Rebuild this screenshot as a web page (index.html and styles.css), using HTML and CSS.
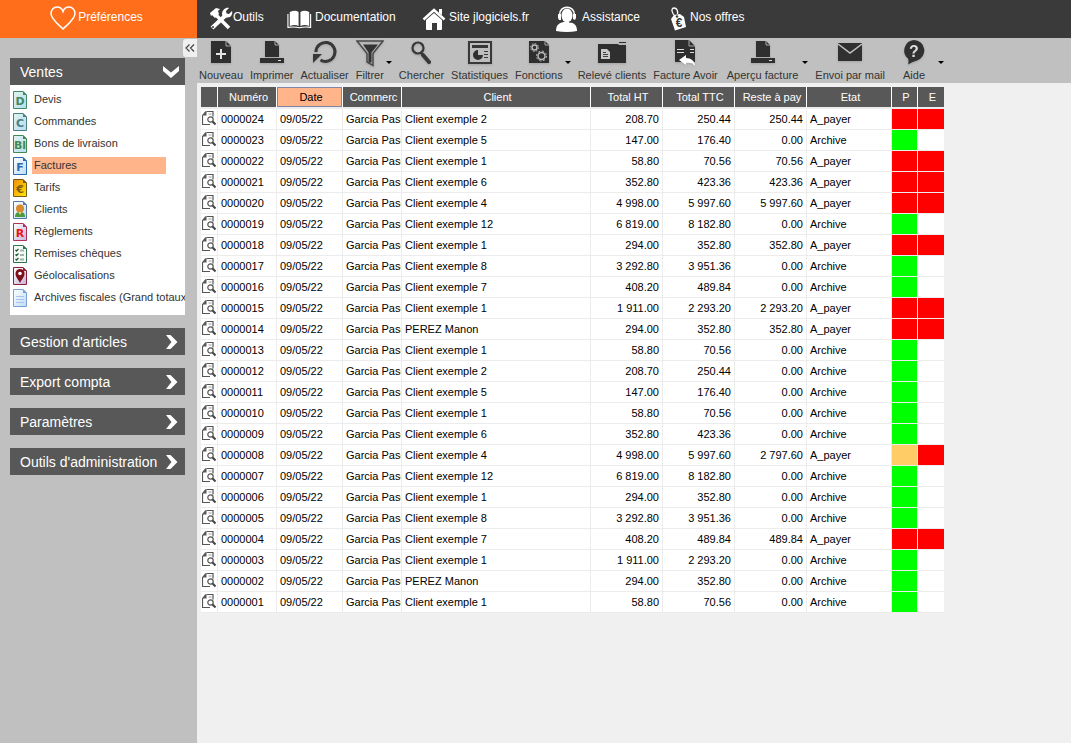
FILE: index.html
```html
<!DOCTYPE html>
<html lang="fr">
<head>
<meta charset="utf-8">
<title>Factures</title>
<link rel="stylesheet" href="styles.css">
</head>
<body>
<svg class="defs" aria-hidden="true">
  <defs>
    <linearGradient id="g-green" x1="0" y1="0" x2="1" y2="1"><stop offset="0" stop-color="#e2f3ee"/><stop offset="1" stop-color="#b4dcf2"/></linearGradient>
    <linearGradient id="g-blue" x1="0" y1="0" x2="1" y2="1"><stop offset="0" stop-color="#fff"/><stop offset="1" stop-color="#bcdcf8"/></linearGradient>
    <linearGradient id="g-gold" x1="0" y1="0" x2="1" y2="1"><stop offset="0" stop-color="#f08c10"/><stop offset="1" stop-color="#ffe800"/></linearGradient>
    <linearGradient id="g-red" x1="0" y1="0" x2="1" y2="1"><stop offset="0" stop-color="#fff"/><stop offset="1" stop-color="#c4b4dc"/></linearGradient>
    <symbol id="sheet" viewBox="0 0 14 18"><path d="M.5.5h9.500l3.500 3.500v13.500h-13z" stroke="currentColor"/><path d="M10 0v4h4z" fill="currentColor"/></symbol>
    <symbol id="printer" viewBox="0 0 26 26"><path d="M6 1h10l4 4v12H6z" fill="#2f2f2f"/><path d="M16 1v4h4" fill="none" stroke="#aaa"/><path d="M1 18h24v5H1z" fill="#2f2f2f"/><path d="M19 20h3v1h-3z" fill="#ddd"/></symbol>
    <symbol id="row-view" viewBox="0 0 14 15"><path d="M4.500.5h6.500v5M4 .5L.5 4.500v9h7.500" fill="none" stroke="#555" stroke-width="1.200"/><path d="M1 4.500h3.500v-4z" fill="#555"/><path d="M6.500 3h3" stroke="#999"/><circle cx="8.500" cy="8.500" r="2.700" fill="#fff" stroke="#555" stroke-width="1.200"/><path d="M10.500 10.500l3 3" stroke="#444" stroke-width="2"/></symbol>
    <symbol id="chevron" viewBox="0 0 14 14"><path d="M1 0h4.500l7 7-7 7H1l5.500-7z" fill="#fff"/></symbol>
  </defs>
</svg>
<div class="app">
  <aside class="side">
    <a class="prefs" href="#">
      <svg width="26" height="24" viewBox="0 0 26 24" fill="none" stroke="#fff" stroke-width="1.500"><path d="M13 23C8 18 1 13 1 7.500 1 4 3.500 1 7 1c3 0 5 1.500 6 4.500C14 2.500 16 1 19 1c3.500 0 6 3 6 6.500C25 13 18 18 13 23z"/></svg>
      <span>Préférences</span>
    </a>
    <button class="collapse" aria-label="Replier"><svg width="10" height="8" viewBox="0 0 10 8" fill="none" stroke="#444" stroke-width="1.200"><path d="M4.500.5L1 4l3.500 3.500M9 .5L5.500 4 9 7.500"/></svg></button>
    <nav class="panels">
      <section>
        <button class="panel-head"><span>Ventes</span><svg class="open" width="16" height="12" viewBox="0 0 16 12"><path d="M0 0l8 6.500L16 0v5l-8 7-8-7z" fill="#fff"/></svg></button>
        <ul class="links">
          <li><a href="#"><svg width="14" height="18" color="#3f8a64"><use href="#sheet" fill="url(#g-green)"/><text x="7" y="14">D</text></svg><span>Devis</span></a></li>
          <li><a href="#"><svg width="14" height="18" color="#4a8082"><use href="#sheet" fill="url(#g-green)"/><text x="7" y="14">C</text></svg><span>Commandes</span></a></li>
          <li><a href="#"><svg width="14" height="18" color="#3f8a50"><use href="#sheet" fill="url(#g-green)"/><text x="7" y="14">Bl</text></svg><span>Bons de livraison</span></a></li>
          <li><a href="#" class="current"><svg width="14" height="18" color="#2b68b4"><use href="#sheet" fill="url(#g-blue)"/><text x="7" y="14">F</text></svg><span>Factures</span></a></li>
          <li><a href="#"><svg width="14" height="18" color="#7a5c10"><use href="#sheet" fill="url(#g-gold)"/><text x="7" y="14">€</text></svg><span>Tarifs</span></a></li>
          <li><a href="#"><svg width="14" height="18" color="#5577a4"><use href="#sheet" fill="url(#g-blue)"/><path d="M2 16c0-4 2-5 5-5s5 1 5 5z" fill="#4d9a3c"/><circle cx="7" cy="7.500" r="4" fill="#d88a2c"/><path d="M5.500 11h3L7 14z" fill="#f6d48a"/></svg><span>Clients</span></a></li>
          <li><a href="#"><svg width="14" height="18" color="#b03058"><use href="#sheet" fill="url(#g-red)"/><text x="7" y="14" class="hot">R</text></svg><span>Règlements</span></a></li>
          <li><a href="#"><svg width="14" height="18" color="#2f7350"><use href="#sheet" fill="#f4faf6"/><path d="M2.500 5l1 1 2-2M2.500 9.500l1 1 2-2M2.500 14l1 1 2-2" fill="none" stroke="#205838" stroke-width="1.300"/><path d="M7 5.500h4M7 10h4M7 14.500h4" stroke="#a3b3aa" stroke-width="2"/></svg><span>Remises chèques</span></a></li>
          <li><a href="#"><svg width="14" height="18" color="#8e2035"><use href="#sheet" fill="url(#g-red)"/><path d="M7 16C5 12 2.500 10 2.500 6.500a4.500 4.500 0 0 1 9 0C11.500 10 9 12 7 16z" fill="#7d1018"/><circle cx="7" cy="6.500" r="1.800" fill="#fff"/></svg><span>Géolocalisations</span></a></li>
          <li><a href="#"><svg width="14" height="18" color="#7a9fd4"><use href="#sheet" fill="url(#g-blue)"/><path d="M3 7.500h8M3 10.500h8M3 13.500h8" stroke="#a9c4ea"/></svg><span>Archives fiscales (Grand totaux</span></a></li>
        </ul>
      </section>
      <button class="panel-head"><span>Gestion d'articles</span><svg width="14" height="16"><use href="#chevron"/></svg></button>
      <button class="panel-head"><span>Export compta</span><svg width="14" height="16"><use href="#chevron"/></svg></button>
      <button class="panel-head"><span>Paramètres</span><svg width="14" height="16"><use href="#chevron"/></svg></button>
      <button class="panel-head"><span>Outils d'administration</span><svg width="14" height="16"><use href="#chevron"/></svg></button>
    </nav>
  </aside>
  <div class="content">
    <nav class="top">
      <a href="#"><svg width="24" height="24" viewBox="0 0 24 24"><path d="M6 7L20 21" stroke="#fff" stroke-width="3.500"/><path d="M1 6l6-5 4 1-2 2 1 3-4 4-3-3-1 1z" fill="#fff"/><path d="M3 21L17 8" stroke="#fff" stroke-width="4"/><path d="M20 1l-3 3 .5 2.500 2.500.5 3-3c1 3-1 7-5 6.500L14 11l-1-4c0-4 4-7 7-6z" fill="#fff"/><circle cx="4" cy="20" r="1" fill="#3a3a3a"/></svg><span>Outils</span></a>
      <a href="#"><svg width="25" height="19" viewBox="0 0 27 20"><path d="M3 2q6-3 9.500 0v15q-4-2-9.500 0zM14.500 2q4-3 9.500 0v15q-5-2-9.500 0z" fill="#fff"/><path d="M1 4v14.500q7-1 12.500.500 5-1.500 12-.5V4" fill="none" stroke="#fff" stroke-width="1.200"/></svg><span>Documentation</span></a>
      <a href="#"><svg width="24" height="22" viewBox="0 0 24 22"><path d="M4 12l8-7 8 7v9q0 1-1 1h-4v-7h-5v7H5q-1 0-1-1z" fill="#fff"/><path d="M1.500 11.500L12 2l10.500 9.500" fill="none" stroke="#fff" stroke-width="2.500"/><path d="M17 1h3v6l-3-2z" fill="#fff"/></svg><span>Site jlogiciels.fr</span></a>
      <a href="#"><svg width="24" height="26" viewBox="0 0 24 26"><path d="M1 25c0-6 3-8 7.500-9h6C19 17 22 19 22 25q-10 2-21 0z" fill="#fff"/><ellipse cx="12" cy="9.500" rx="5.500" ry="7" fill="#fff"/><path d="M4.500 9C4.500-1.500 19.500-1.500 19.500 9" fill="none" stroke="#fff" stroke-width="1.500"/><path d="M3 8h3v6H4l-1-2zM18 8h3v4l-1 2h-2z" fill="#fff"/><path d="M19 13q-1 4-5 3" fill="none" stroke="#3a3a3a"/></svg><span>Assistance</span></a>
      <a href="#"><svg width="17" height="24" viewBox="0 0 17 24"><path d="M1 12l3-4 6-1 4 3 2 10-11 3.500z" fill="#fff"/><path d="M6 10C1 6 1 1 4 1s4 3 3.500 6" fill="none" stroke="#fff" stroke-width="1.300"/><circle cx="7" cy="9.500" r="1.200" fill="#3a3a3a"/><text x="9" y="20" class="euro">€</text></svg><span>Nos offres</span></a>
    </nav>
    <div class="tools">
      <button><svg width="26" height="26" viewBox="0 0 26 26"><path d="M3 1h15l5 5v17H3z" fill="#2f2f2f"/><path d="M18 1v5h5" fill="none" stroke="#aaa"/><path d="M13 9v10M8 14h10" stroke="#e4e4e4" stroke-width="2"/></svg><span>Nouveau</span></button>
      <button><svg width="26" height="26"><use href="#printer"/></svg><span>Imprimer</span></button>
      <button><svg width="26" height="26" viewBox="0 0 26 26"><path d="M4 12a9.500 9.500 0 1 1 4.500 8" fill="none" stroke="#383838" stroke-width="3"/><path d="M1 14h9l-9 9z" fill="#383838"/></svg><span>Actualiser</span></button>
      <button class="drop"><svg width="28" height="27" viewBox="0 0 28 27"><path d="M1 1.500h26L17 14v12l-6-3.500V14z" fill="none" stroke="#4a4a4a" stroke-width="1.500"/><path d="M7 5h15l-6.500 8v10h-3V13z" fill="#333"/></svg><span>Filtrer</span></button>
      <button><svg width="26" height="26" viewBox="0 0 26 26"><circle cx="10" cy="8" r="5.500" fill="none" stroke="#383838" stroke-width="2.200"/><path d="M13 12l2 3" stroke="#383838" stroke-width="2"/><path d="M15 15l6 7" stroke="#383838" stroke-width="4" stroke-linecap="round"/></svg><span>Chercher</span></button>
      <button><svg width="26" height="26" viewBox="0 0 26 26"><path d="M2 2h22v21H2z" fill="#bdbdbd" stroke="#383838" stroke-width="2"/><path d="M5 5h16v3H5z" fill="#383838"/><path d="M11 10v5h5a5 5 0 1 1-5-5z" fill="#303030"/><path d="M17 11.500h4M17 14.500h4M17 17.500h4" stroke="#383838"/></svg><span>Statistiques</span></button>
      <button class="drop"><svg width="26" height="26" viewBox="0 0 26 26"><path d="M3 1h16l4 4v18H3z" fill="#2f2f2f"/><path d="M19 1v4h4" fill="none" stroke="#aaa"/><g fill="none" stroke="#bbb"><circle cx="8.500" cy="7.500" r="2.500" stroke-width="1.500"/><circle cx="8.500" cy="7.500" r="4" stroke-dasharray="1.600 1.500"/><circle cx="15.500" cy="16" r="3.500" stroke-width="1.500"/><circle cx="15.500" cy="16" r="5" stroke-dasharray="2 1.900"/></g></svg><span>Fonctions</span></button>
      <button><svg width="28" height="26" viewBox="0 0 28 26"><path d="M0 4h20l1 1h7v18H0z" fill="#2f2f2f"/><path d="M21 2h7v1h-7z" fill="#2f2f2f"/><path d="M3 9h6l3 3v7H3z" fill="#c9c9c9"/><path d="M5 12.500h3M5 14.500h5M5 16.500h5" stroke="#444"/></svg><span>Relevé clients</span></button>
      <button><svg width="26" height="28" viewBox="0 0 26 28"><path d="M3 1h14l6 6v16H3z" fill="#2f2f2f"/><path d="M17 1v6h6" fill="none" stroke="#aaa"/><path d="M5 10.500h7M5 13.500h7M18 10.500h4M18 13.500h4" stroke="#ddd"/><path d="M7 21l7-5v3c5 0 9 3 9 8-2-3-5-4-9-3v2z" fill="#fff"/></svg><span>Facture Avoir</span></button>
      <button class="drop roomy"><svg width="26" height="26"><use href="#printer"/></svg><span>Aperçu facture</span></button>
      <button><svg width="26" height="26" viewBox="0 0 26 26"><path d="M1 3h24v18H1z" fill="#303030"/><path d="M1 4l12 9 12-9" fill="none" stroke="#c4c4c4" stroke-width="1.500"/></svg><span>Envoi par mail</span></button>
      <button class="drop wide"><svg width="26" height="26" viewBox="0 0 26 26"><path d="M13 0a10.500 10.500 0 0 1 3 20.500q-4 1-9 4 1-3 0-6A10.500 10.500 0 0 1 13 0z" fill="#303030"/><text x="13" y="17" class="help">?</text></svg><span>Aide</span></button>
    </div>
    <main class="list">
      <table>
        <colgroup><col class="w-icon"><col class="w-code"><col class="w-date"><col class="w-code"><col class="w-client"><col class="w-sum"><col class="w-sum"><col class="w-sum"><col class="w-state"><col class="w-flag"><col class="w-flag"></colgroup>
        <thead><tr><th></th><th>Numéro</th><th class="sorted">Date</th><th>Commerc</th><th>Client</th><th>Total HT</th><th>Total TTC</th><th>Reste à pay</th><th>Etat</th><th>P</th><th>E</th></tr></thead>
        <tbody id="rows"></tbody>
      </table>
    </main>
  </div>
</div>
<script src="rows.js"></script>
</body>
</html>
```

FILE: rows.js
```js
// client, total HT, total TTC, remaining amount ("" when archived), P flag
const invoices = [
  ["Client exemple 2", "208.70", "250.44", "250.44"],
  ["Client exemple 5", "147.00", "176.40", ""],
  ["Client exemple 1", "58.80", "70.56", "70.56"],
  ["Client exemple 6", "352.80", "423.36", "423.36"],
  ["Client exemple 4", "4 998.00", "5 997.60", "5 997.60"],
  ["Client exemple 12", "6 819.00", "8 182.80", ""],
  ["Client exemple 1", "294.00", "352.80", "352.80"],
  ["Client exemple 8", "3 292.80", "3 951.36", ""],
  ["Client exemple 7", "408.20", "489.84", ""],
  ["Client exemple 1", "1 911.00", "2 293.20", "2 293.20"],
  ["PEREZ Manon", "294.00", "352.80", "352.80"],
  ["Client exemple 1", "58.80", "70.56", ""],
  ["Client exemple 2", "208.70", "250.44", ""],
  ["Client exemple 5", "147.00", "176.40", ""],
  ["Client exemple 1", "58.80", "70.56", ""],
  ["Client exemple 6", "352.80", "423.36", ""],
  ["Client exemple 4", "4 998.00", "5 997.60", "2 797.60", "partial"],
  ["Client exemple 12", "6 819.00", "8 182.80", ""],
  ["Client exemple 1", "294.00", "352.80", ""],
  ["Client exemple 8", "3 292.80", "3 951.36", ""],
  ["Client exemple 7", "408.20", "489.84", "489.84"],
  ["Client exemple 1", "1 911.00", "2 293.20", ""],
  ["PEREZ Manon", "294.00", "352.80", ""],
  ["Client exemple 1", "58.80", "70.56", ""]
];

document.getElementById("rows").innerHTML = invoices.map(([client, ht, ttc, due, flag], i) => {
  const number = String(invoices.length - i).padStart(7, "0");
  const paid = due ? flag || "unpaid" : "paid";
  return `<tr><td class="view"><svg width="14" height="15"><use href="#row-view"/></svg></td>
    <td>${number}</td><td>09/05/22</td><td class="agent">Garcia Pasc</td><td>${client}</td>
    <td class="num">${ht}</td><td class="num">${ttc}</td><td class="num">${due || "0.00"}</td>
    <td>${due ? "A_payer" : "Archive"}</td><td class="${paid}"></td><td class="${due ? "unpaid" : ""}"></td></tr>`;
}).join("");
```

FILE: styles.css
```css
* { box-sizing: border-box; }
body { margin: 0; background: #f0f0f0; color: #333; font: 11px/14px "Liberation Sans", Arial, sans-serif; }
a { color: inherit; text-decoration: none; }
button { margin: 0; padding: 0; border: 0; background: none; color: inherit; font: inherit; }
svg { flex: none; display: block; }
.defs { position: absolute; width: 0; height: 0; }

.app { display: flex; min-height: 100vh; }
.side { flex: none; display: flex; flex-direction: column; width: 197px; background: #c0c0c0; }
.content { flex: 1; min-width: 0; }

.prefs { display: flex; align-items: center; justify-content: center; gap: 2px; height: 38px; padding: 0 4px 4px 0; background: #ff6e1a; color: #fff; font-size: 12px; }
.prefs svg { margin-top: 2px; }
.collapse { display: grid; place-items: center; align-self: flex-end; width: 14px; height: 18px; margin: 1px 0; border-radius: 3px 0 0 3px; background: #f0f0f0; }
.panels { display: flex; flex-direction: column; gap: 13px; padding: 0 12px 0 10px; }
.panel-head { display: flex; align-items: center; justify-content: space-between; width: 100%; height: 27px; padding: 0 6px 0 10px; background: #585858; color: #fff; font-size: 14px; line-height: 18px; white-space: nowrap; }
.links { margin: 0; padding: 3px 0 7px 3px; list-style: none; background: #fff; overflow: hidden; }
.links a { display: flex; align-items: center; gap: 5px; height: 22px; white-space: nowrap; }
.links a svg { margin-top: 2px; }
.links a span { flex: none; padding: 1px 2px 2px; }
.links .current span { width: 134px; background: #ffb48a; }
.links text { fill: currentColor; font: bold 11px "DejaVu Sans", sans-serif; text-anchor: middle; }
.links .hot { fill: #f01010; }

.top { display: grid; grid-template-columns: 78px 135px 133px 115px auto; justify-content: start; height: 38px; padding-left: 12px; background: #3a3a3a; color: #fff; font-size: 12px; }
.top a { display: flex; align-items: center; gap: 3px; padding-bottom: 4px; white-space: nowrap; }
.top a:first-child { gap: 0; }
.top svg { margin-top: 4px; }
.euro { fill: #333; font: bold 12px "Liberation Sans", sans-serif; text-anchor: middle; }

.tools { display: flex; gap: 7px; height: 45px; padding: 1px 2px 0; background: #c0c0c0; }
.tools button { position: relative; display: flex; flex-direction: column; align-items: center; white-space: nowrap; }
.tools svg { height: 28px; margin-bottom: 1px; filter: drop-shadow(0 1px 1px #8888); }
.tools .drop { margin-right: 8px; }
.tools .drop::after { content: ""; position: absolute; left: 100%; top: 22px; margin-left: 2px; border: solid transparent; border-width: 3px 3px 0; border-top-color: #000; }
.tools .roomy { padding: 0 2px; }
.tools .wide { padding: 0 9px; }
.help { fill: #ddd; font: bold 16px "Liberation Sans", sans-serif; text-anchor: middle; }

.list { padding: 4px; }
table { width: 743px; table-layout: fixed; border-spacing: 0; color: #000; }
.w-icon { width: 17px; }
.w-code { width: 59px; }
.w-date { width: 66px; }
.w-client { width: 189px; }
.w-sum { width: 72px; }
.w-state { width: 85px; }
.w-flag { width: 26px; }
th, td { padding: 0 3px; overflow: hidden; white-space: nowrap; border-right: 1px solid #ececec; }
th { height: 22px; padding: 0 0 0 3px; border-right-color: #fff; border-bottom: 2px solid #ececec; background: #585858; background-clip: padding-box; color: #fff; font-weight: normal; }
.sorted { background-color: #ffb48a; color: #000; box-shadow: inset 0 0 0 1px #7f86a8; }
td { height: 21px; border-bottom: 1px solid #ececec; background: #fff; background-clip: padding-box; }
tr > :last-child { border-right: 0; }
.view { padding: 0 1px 2px; }
.agent { padding-right: 0; }
.num { text-align: right; }
.paid { background-color: #0f0; }
.unpaid { background-color: #f00; }
.partial { background-color: #ffcc66; }
```
